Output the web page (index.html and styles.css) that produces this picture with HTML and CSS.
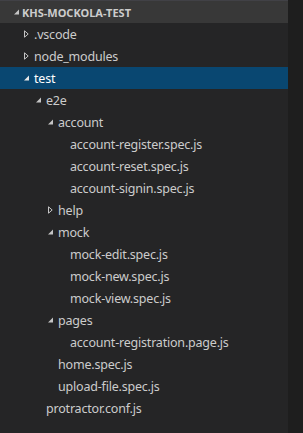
FILE: index.html
```html
<!DOCTYPE html>
<html lang="en">
<head>
<meta charset="UTF-8" />
<title>Explorer</title>
<link rel="stylesheet" href="styles.css">
</head>
<body>

<div class="explorer">
<div class="tree">
<div class="section-head">
<span class="twistie"><svg width="6" height="6" viewBox="0 0 6 6"><path d="M5 0.5V5.5H0Z" fill="#c5c5c5"/></svg></span>
<span class="title">KHS-MOCKOLA-TEST</span>
</div>

<div class="row lvl0"><span class="twistie"><svg width="5" height="8" viewBox="0 0 5 8"><path d="M0.5 0.8L4.2 4L0.5 7.2Z" fill="none" stroke="#c5c5c5"/></svg></span><span class="name">.vscode</span></div>
<div class="row lvl0"><span class="twistie"><svg width="5" height="8" viewBox="0 0 5 8"><path d="M0.5 0.8L4.2 4L0.5 7.2Z" fill="none" stroke="#c5c5c5"/></svg></span><span class="name">node_modules</span></div>
<div class="row lvl0 selected"><span class="twistie"><svg width="6" height="6" viewBox="0 0 6 6"><path d="M5 0.5V5.5H0Z" fill="#e8e8e8"/></svg></span><span class="name">test</span></div>
<div class="row lvl1"><span class="twistie"><svg width="6" height="6" viewBox="0 0 6 6"><path d="M5 0.5V5.5H0Z" fill="#c5c5c5"/></svg></span><span class="name">e2e</span></div>
<div class="row lvl2"><span class="twistie"><svg width="6" height="6" viewBox="0 0 6 6"><path d="M5 0.5V5.5H0Z" fill="#c5c5c5"/></svg></span><span class="name">account</span></div>
<div class="row lvl3"><span class="twistie"></span><span class="name">account-register.spec.js</span></div>
<div class="row lvl3"><span class="twistie"></span><span class="name">account-reset.spec.js</span></div>
<div class="row lvl3"><span class="twistie"></span><span class="name">account-signin.spec.js</span></div>
<div class="row lvl2"><span class="twistie"><svg width="5" height="8" viewBox="0 0 5 8"><path d="M0.5 0.8L4.2 4L0.5 7.2Z" fill="none" stroke="#c5c5c5"/></svg></span><span class="name">help</span></div>
<div class="row lvl2"><span class="twistie"><svg width="6" height="6" viewBox="0 0 6 6"><path d="M5 0.5V5.5H0Z" fill="#c5c5c5"/></svg></span><span class="name">mock</span></div>
<div class="row lvl3"><span class="twistie"></span><span class="name">mock-edit.spec.js</span></div>
<div class="row lvl3"><span class="twistie"></span><span class="name">mock-new.spec.js</span></div>
<div class="row lvl3"><span class="twistie"></span><span class="name">mock-view.spec.js</span></div>
<div class="row lvl2"><span class="twistie"><svg width="6" height="6" viewBox="0 0 6 6"><path d="M5 0.5V5.5H0Z" fill="#c5c5c5"/></svg></span><span class="name">pages</span></div>
<div class="row lvl3"><span class="twistie"></span><span class="name">account-registration.page.js</span></div>
<div class="row lvl2"><span class="twistie"></span><span class="name">home.spec.js</span></div>
<div class="row lvl2"><span class="twistie"></span><span class="name">upload-file.spec.js</span></div>
<div class="row lvl1"><span class="twistie"></span><span class="name">protractor.conf.js</span></div>
</div>
<div class="scroll-gutter"></div>
</div>

</body>
</html>
```
FILE: styles.css
```css
* {
box-sizing: border-box;
}

html, body {
margin: 0;
height: 100%;
}

body {
background: #252526;
font-family: 'Noto Sans', 'Open Sans', sans-serif;
font-size: 12.5px;
letter-spacing: -0.2px;
color: #cccccc;
}

.explorer {
display: flex;
height: 100%;
}

.tree {
flex: 1;
background: #252526;
}

.scroll-gutter {
width: 15px;
background: #1e1e1e;
}

.section-head {
height: 23px;
display: flex;
align-items: center;
background: #383838;
border-top: 1px solid #414146;
padding-left: 10px;
}

.section-head .twistie {
width: 12px;
}

.section-head .title {
font-size: 11px;
font-weight: 700;
letter-spacing: 0;
color: #cccccc;
}

.row {
height: 22px;
display: flex;
align-items: center;
white-space: nowrap;
}

.row.selected {
background: #094771;
color: #ffffff;
}

.twistie {
width: 14px;
flex-shrink: 0;
display: flex;
align-items: center;
padding-left: 4px;
}

.twistie svg {
display: block;
}

.lvl0 { padding-left: 20px; }
.lvl1 { padding-left: 32px; }
.lvl2 { padding-left: 44px; }
.lvl3 { padding-left: 56px; }
```
